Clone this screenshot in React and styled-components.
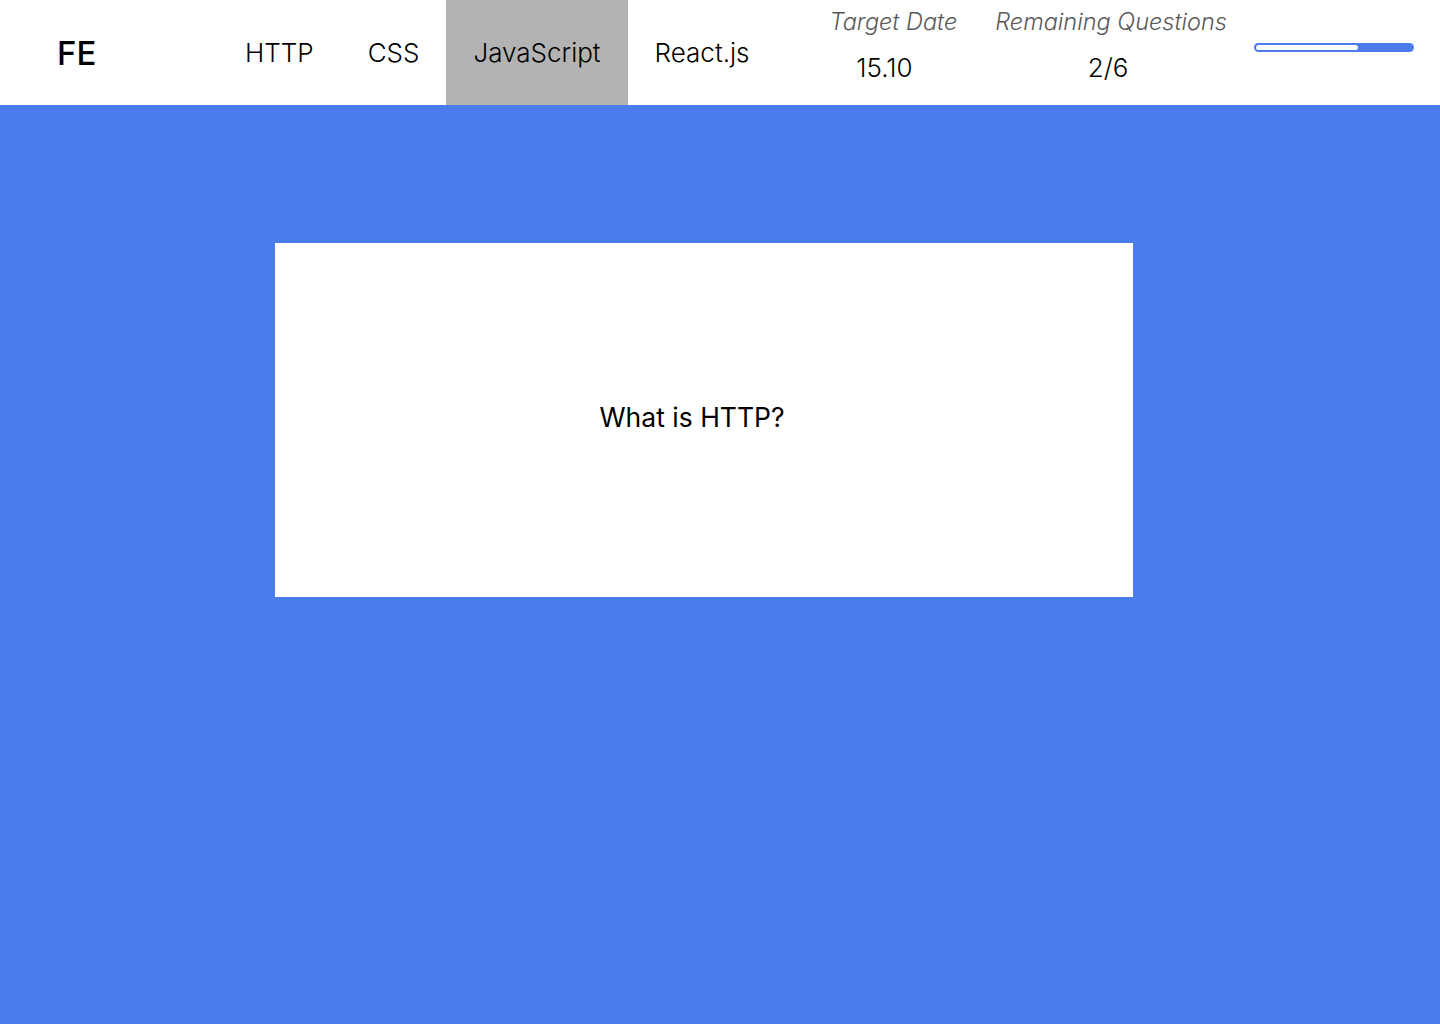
import React from "react";
import styled, { createGlobalStyle } from "styled-components";

const GlobalStyle = createGlobalStyle`
  html, body {
    margin: 0;
    padding: 0;
  }
  body {
    font-family: Inter, "Noto Sans", sans-serif;
    background: #4b7bec;
    color: #000;
  }
`;

const Page = styled.div`
  min-height: 1024px;
  background: #4b7bec;
  display: flex;
  flex-direction: column;
`;

const Header = styled.header`
  height: 105px;
  background: #fff;
  display: flex;
  align-items: stretch;
`;

const Logo = styled.div`
  width: 161px;
  padding-left: 57px;
  display: flex;
  align-items: center;
  font-size: 33px;
  font-weight: 500;
`;

const Nav = styled.nav`
  display: flex;
  align-items: stretch;
`;

const NavItem = styled.div`
  display: flex;
  align-items: center;
  padding: 0 27px;
  font-size: 26px;
  font-weight: 300;
  background: ${({ active }) => (active ? "#b3b3b3" : "transparent")};
  cursor: pointer;
`;

const Stats = styled.div`
  display: flex;
  margin-left: 53px;
  gap: 38px;
  padding-top: 6px;
`;

const Stat = styled.div`
  display: flex;
  flex-direction: column;
  align-items: center;
`;

const StatLabel = styled.div`
  font-size: 23.5px;
  font-weight: 300;
  font-style: italic;
  color: #5a5a5a;
  line-height: 32px;
`;

const StatValue = styled.div`
  font-size: 26px;
  font-weight: 300;
  line-height: 32px;
  margin-top: 14px;
  margin-right: ${({ offset }) => offset}px;
`;

const ProgressTrack = styled.div`
  margin-left: 27px;
  margin-top: 43px;
  width: 160px;
  height: 9px;
  box-sizing: border-box;
  border-radius: 5px;
  background: #4b7bec;
  padding: 2px;
`;

const ProgressFill = styled.div`
  height: 100%;
  background: #fff;
  border-radius: 3px;
`;

const Main = styled.main`
  flex: 1;
  display: flex;
  justify-content: center;
  padding: 138px 307px 0 275px;
  align-items: flex-start;
`;

const Card = styled.div`
  width: 858px;
  height: 354px;
  background: #fff;
  display: flex;
  align-items: center;
  justify-content: center;
  box-sizing: border-box;
  padding: 0 24px 6px 0;
`;

const Question = styled.div`
  font-size: 26.5px;
  font-weight: 400;
`;

const topics = ["HTTP", "CSS", "JavaScript", "React.js"];

export default function App() {
  const done = 2;
  const total = 6;
  return (
    <>
      <GlobalStyle />
      <Page>
        <Header>
          <Logo>FE</Logo>
          <Nav>
            {topics.map((t) => (
              <NavItem key={t} active={t === "JavaScript"}>
                {t}
              </NavItem>
            ))}
          </Nav>
          <Stats>
            <Stat>
              <StatLabel>Target Date</StatLabel>
              <StatValue offset={18}>15.10</StatValue>
            </Stat>
            <Stat>
              <StatLabel>Remaining Questions</StatLabel>
              <StatValue offset={6}>
                {done}/{total}
              </StatValue>
            </Stat>
          </Stats>
          <ProgressTrack>
            <ProgressFill style={{ width: `${(100 * (total - done)) / total / 1.02}%` }} />
          </ProgressTrack>
        </Header>
        <Main>
          <Card>
            <Question>What is HTTP?</Question>
          </Card>
        </Main>
      </Page>
    </>
  );
}
